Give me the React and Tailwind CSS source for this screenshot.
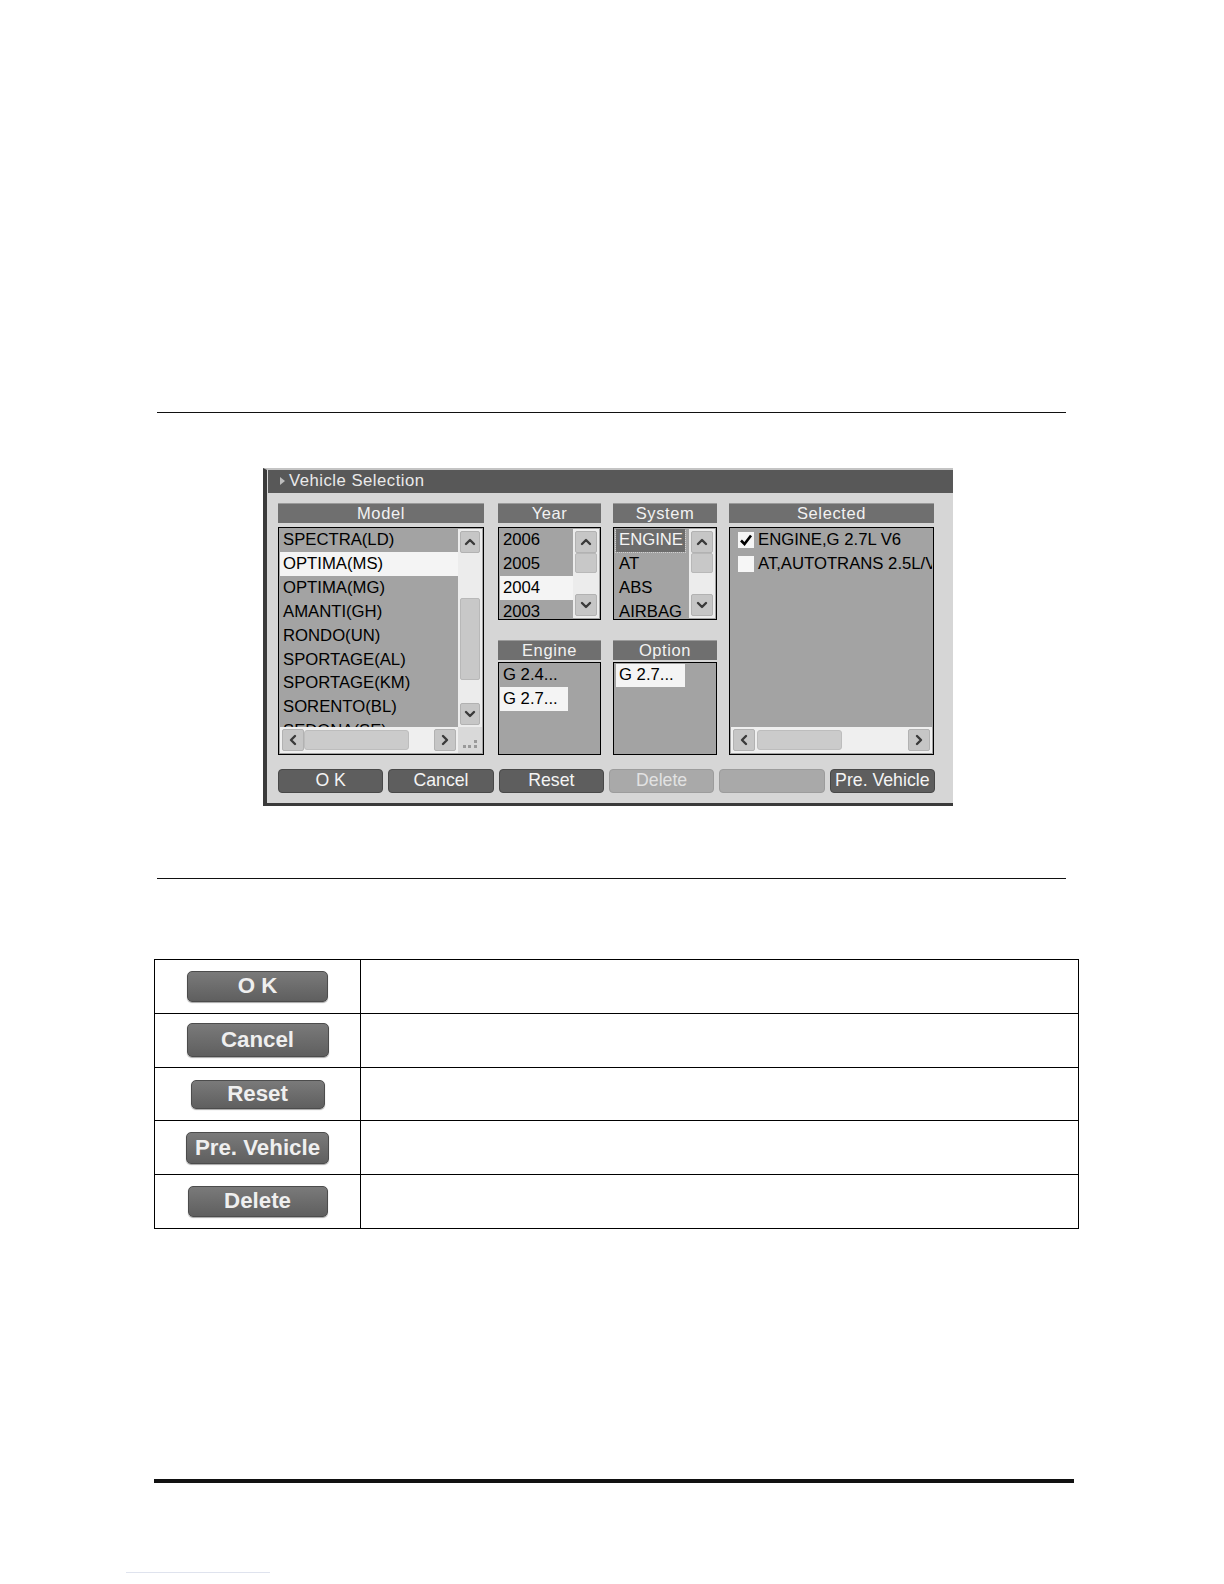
import React from 'react';

const font = { fontFamily: '"Liberation Sans", Arial, sans-serif' };

const Chevron = ({ dir = 'up' }) => {
  const paths = {
    up: 'M3 9 L7 5 L11 9',
    down: 'M3 5 L7 9 L11 5',
    left: 'M9 3 L5 7 L9 11',
    right: 'M5 3 L9 7 L5 11',
  };
  return (
    <svg width="14" height="14" viewBox="0 0 14 14">
      <path d={paths[dir]} fill="none" stroke="#3a3a3a" strokeWidth="2.4" strokeLinecap="round" strokeLinejoin="round" />
    </svg>
  );
};

const ScrollBtn = ({ dir, className = '' }) => (
  <div className={`shrink-0 flex items-center justify-center bg-[#c6c6c6] border border-[#b2b2b2] rounded-[2px] ${className}`}>
    <Chevron dir={dir} />
  </div>
);

const VScroll = ({ thumbTop, thumbH, className = '' }) => (
  <div className={`relative shrink-0 flex flex-col justify-between bg-[#ececec] p-[2px] ${className}`}>
    <ScrollBtn dir="up" className="h-[22px]" />
    <div
      className="absolute left-[2px] right-[2px] bg-[#c8c8c8] border border-[#b8b8b8] rounded-[2px]"
      style={{ top: thumbTop, height: thumbH }}
    />
    <ScrollBtn dir="down" className="h-[22px]" />
  </div>
);

const HScroll = ({ thumbLeft, thumbW }) => (
  <div className="relative flex justify-between bg-[#efefef] p-[2px] h-[26px]">
    <ScrollBtn dir="left" className="w-[22px]" />
    <div
      className="absolute top-[3px] bottom-[3px] bg-[#cbcbcb] border border-[#bdbdbd] rounded-[3px]"
      style={{ left: thumbLeft, width: thumbW }}
    />
    <ScrollBtn dir="right" className="w-[22px]" />
  </div>
);

const Header = ({ children }) => (
  <div className="h-[20px] bg-[#6f6f6f] border-t border-[#9a9a9a] flex items-center justify-center text-[16.5px] leading-none text-[#f2f2f2] tracking-[0.6px]">
    {children}
  </div>
);

const Row = ({ children, hl, dark, w }) => (
  <div className="h-[23.9px] flex items-center">
    <div
      className={`h-full flex items-center pl-[3px] text-[16.7px] leading-none whitespace-nowrap ${
        hl ? 'bg-[#f4f4f4] text-black' : dark ? 'bg-[#6c6c6c] text-[#f4f4f4] outline outline-1 outline-dotted outline-[#d0d0d0]' : 'text-black'
      }`}
      style={{ width: w }}
    >
      {children}
    </div>
  </div>
);

const models = ['SPECTRA(LD)', 'OPTIMA(MS)', 'OPTIMA(MG)', 'AMANTI(GH)', 'RONDO(UN)', 'SPORTAGE(AL)', 'SPORTAGE(KM)', 'SORENTO(BL)', 'SEDONA(SE)'];

const DlgButton = ({ children, disabled }) => (
  <div
    className={`flex-1 h-[24px] rounded-[4px] flex items-center justify-center text-[17.7px] leading-none ${
      disabled ? 'bg-[#a9a9a9] text-[#e2e2e2] border border-[#9c9c9c]' : 'bg-[#5e5e5e] text-[#f4f4f4] border border-[#484848]'
    }`}
  >
    {children}
  </div>
);

const Check = ({ on }) => (
  <div className="shrink-0 w-[16px] h-[16px] bg-[#f6f6f6] flex items-center justify-center mr-[4px]">
    {on && (
      <svg width="14" height="14" viewBox="0 0 14 14">
        <path d="M2 7.5 L5.5 11 L12 2.5" fill="none" stroke="#000" strokeWidth="2.6" />
      </svg>
    )}
  </div>
);

const Dialog = () => (
  <div className="ml-[263px] mt-[55.5px] w-[690px] h-[338px] bg-[#d6d6d6] border-l-4 border-b-[3px] border-[#3a3a3a] border-t-2 border-t-[#c4c4c4]" style={font}>
    <div className="ml-[1px] h-[22.5px] bg-[#585858] flex items-center pl-[12px] text-[16.7px] tracking-[0.5px] text-[#eaeaea] leading-none">
      <svg width="6" height="8" viewBox="0 0 6 8" className="mr-[3px]">
        <path d="M0 0 L5 4 L0 8 Z" fill="#bdbdbd" />
      </svg>
      Vehicle Selection
    </div>
    <div className="pl-[11px] pt-[10px]">
      <div className="flex">
        {/* Model */}
        <div className="w-[206px] flex flex-col gap-[4px]">
          <Header>Model</Header>
          <div className="h-[228px] border border-black bg-[#a3a3a3] p-[1px] flex flex-col">
            <div className="flex h-[198px]">
              <div className="flex-1 overflow-hidden">
                {models.map((m, i) => (
                  <Row key={m} hl={i === 1} w="100%">{m}</Row>
                ))}
              </div>
              <VScroll thumbTop={69} thumbH={82} className="w-[24px]" />
            </div>
            <div className="flex">
              <div className="flex-1">
                <HScroll thumbLeft={24} thumbW={105} />
              </div>
              <div className="w-[24px] bg-[#d9d9d9] grid grid-cols-3 gap-[2px] p-[5px] content-end">
                {[0, 1, 2, 3, 4, 5].map((d) => (
                  <div key={d} className={`w-[3px] h-[3px] bg-[#9a9a9a] ${d === 0 || d === 1 ? 'opacity-0' : ''}`} />
                ))}
              </div>
            </div>
          </div>
        </div>

        {/* Year + Engine */}
        <div className="ml-[14px] w-[103px] flex flex-col">
          <Header>Year</Header>
          <div className="mt-[4px] h-[93px] border border-black bg-[#a3a3a3] p-[1px] flex">
            <div className="flex-1 overflow-hidden">
              {['2006', '2005', '2004', '2003'].map((y, i) => (
                <Row key={y} hl={i === 2} w="100%">{y}</Row>
              ))}
            </div>
            <VScroll thumbTop={24} thumbH={20} className="w-[26px]" />
          </div>
          <div className="mt-[20px]">
            <Header>Engine</Header>
          </div>
          <div className="mt-[2px] h-[93px] border border-black bg-[#a3a3a3] p-[1px]">
            <Row w="auto">G 2.4...</Row>
            <Row hl w="68px">G 2.7...</Row>
          </div>
        </div>

        {/* System + Option */}
        <div className="ml-[12px] w-[104px] flex flex-col">
          <Header>System</Header>
          <div className="mt-[4px] h-[93px] border border-black bg-[#a3a3a3] p-[1px] flex">
            <div className="flex-1 overflow-hidden pl-[1px]">
              <Row dark w="69px">ENGINE</Row>
              <Row w="100%">AT</Row>
              <Row w="100%">ABS</Row>
              <Row w="100%">AIRBAG</Row>
            </div>
            <VScroll thumbTop={24} thumbH={20} className="w-[26px]" />
          </div>
          <div className="mt-[20px]">
            <Header>Option</Header>
          </div>
          <div className="mt-[2px] h-[93px] border border-black bg-[#a3a3a3] p-[1px] pl-[2px]">
            <Row hl w="69px">G 2.7...</Row>
          </div>
        </div>

        {/* Selected */}
        <div className="ml-[12px] w-[205px] flex flex-col gap-[4px]">
          <Header>Selected</Header>
          <div className="h-[228px] border border-black bg-[#a3a3a3] p-[1px] flex flex-col">
            <div className="flex-1 overflow-hidden pl-[7px]">
              <div className="h-[23.9px] flex items-center text-[16.7px] leading-none whitespace-nowrap">
                <Check on />
                ENGINE,G 2.7L V6
              </div>
              <div className="h-[23.9px] flex items-center text-[16.7px] leading-none whitespace-nowrap">
                <Check />
                AT,AUTOTRANS 2.5L/V6
              </div>
            </div>
            <div className="bg-[#f7f7f7]">
              <HScroll thumbLeft={26} thumbW={85} />
            </div>
          </div>
        </div>
      </div>

      <div className="mt-[14px] w-[657px] flex gap-[5px]">
        <DlgButton>O K</DlgButton>
        <DlgButton>Cancel</DlgButton>
        <DlgButton>Reset</DlgButton>
        <DlgButton disabled>Delete</DlgButton>
        <DlgButton disabled></DlgButton>
        <DlgButton>Pre. Vehicle</DlgButton>
      </div>
    </div>
  </div>
);

const TableButton = ({ label, w, h }) => (
  <div
    className="rounded-[5px] border border-[#4c4c4c] bg-gradient-to-b from-[#7a7a7a] to-[#5f5f5f] shadow-[0_1px_1px_rgba(0,0,0,0.35)] flex items-center justify-center text-[22.3px] font-bold leading-none text-[#efefef]"
    style={{ width: w, height: h }}
  >
    {label}
  </div>
);

const rows = [
  { label: 'O K', w: 141, h: 31 },
  { label: 'Cancel', w: 142, h: 34 },
  { label: 'Reset', w: 134, h: 29 },
  { label: 'Pre. Vehicle', w: 143, h: 32 },
  { label: 'Delete', w: 140, h: 31 },
];

export default function App() {
  return (
    <div className="min-h-screen bg-white overflow-hidden" style={font}>
      <div className="pt-[411.5px] pb-[6px]">
        <div className="ml-[157px] w-[909px] h-[1px] bg-[#111]" />
        <Dialog />
        <div className="ml-[157px] mt-[71.6px] w-[909px] h-[1px] bg-[#111]" />

        <div className="ml-[154px] mt-[80px] w-[925px] border border-black">
          {rows.map((r, i) => (
            <div key={r.label} className={`flex h-[53.6px] ${i > 0 ? 'border-t border-black' : ''}`}>
              <div className="w-[206px] border-r border-black flex items-center justify-center">
                <TableButton label={r.label} w={r.w} h={r.h} />
              </div>
              <div className="flex-1" />
            </div>
          ))}
        </div>

        <div className="ml-[154px] mt-[250px] w-[920px] h-[4px] bg-[#111]" />
        <div className="ml-[126px] mt-[89px] w-[144px] h-[1px] bg-[#dfe3ee]" />
      </div>
    </div>
  );
}
